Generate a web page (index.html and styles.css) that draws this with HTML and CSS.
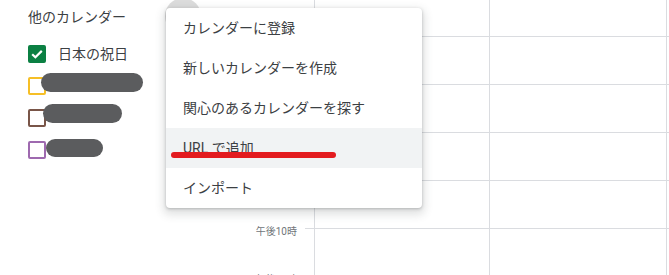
FILE: index.html
```html
<!DOCTYPE html>
<html lang="ja">
<head>
<meta charset="utf-8">
<title>他のカレンダー</title>
<link rel="stylesheet" href="styles.css">
</head>
<body>
<div class="page">
  <aside class="sidebar">
    <div class="section-title">他のカレンダー</div>
    <ul class="cal-list">
      <li class="cal-row">
        <span class="checkbox checked green">
          <svg viewBox="0 0 18 18" width="18" height="18"><path d="M4.2 9.2l3.2 3.1 6.4-6.4" fill="none" stroke="#fff" stroke-width="2.2"/></svg>
        </span>
        <span class="cal-name">日本の祝日</span>
      </li>
      <li class="cal-row">
        <span class="checkbox yellow"></span>
        <span class="redact r1"></span>
      </li>
      <li class="cal-row">
        <span class="checkbox brown"></span>
        <span class="redact r2"></span>
      </li>
      <li class="cal-row">
        <span class="checkbox purple"></span>
        <span class="redact r3"></span>
      </li>
    </ul>
  </aside>
  <div class="gutter">
    <div class="labels">
      <div class="hour">午後10時</div>
      <div class="hour">午後11時</div>
    </div>
    <div class="ticks"></div>
  </div>
  <div class="days">
    <div class="day d1"></div>
    <div class="day d2"></div>
    <div class="day d3"></div>
  </div>

  <span class="hover-circle"></span>
  <div class="menu">
    <div class="menu-item">カレンダーに登録</div>
    <div class="menu-item">新しいカレンダーを作成</div>
    <div class="menu-item">関心のあるカレンダーを探す</div>
    <div class="menu-item active">URL で追加<span class="red-mark"></span></div>
    <div class="menu-item">インポート</div>
  </div>
</div>
</body>
</html>
```

FILE: styles.css
```css
* { box-sizing: border-box; }
html, body {
  margin: 0;
  padding: 0;
  background: #fff;
  overflow: hidden;
}
body {
  font-family: Roboto, "Noto Sans CJK JP", sans-serif;
  color: #3c4043;
}
.page {
  position: relative;
  display: flex;
  width: 669px;
  height: 275px;
  overflow: hidden;
}
.sidebar {
  width: 240px;
  flex: none;
  padding: 7px 0 0 28px;
}
.section-title {
  font-size: 14px;
  line-height: 20px;
  height: 20px;
}
.cal-list {
  list-style: none;
  margin: 11px 0 0;
  padding: 0;
}
.cal-row {
  position: relative;
  display: flex;
  align-items: center;
  height: 32px;
}
.checkbox {
  width: 18px;
  height: 18px;
  border: 2px solid;
  border-radius: 2px;
  flex: none;
  display: flex;
}
.checkbox svg { margin: -2px; }
.checkbox.checked.green { background: #0b8043; border-color: #0b8043; }
.checkbox.yellow { border-color: #f6bf26; }
.checkbox.brown { border-color: #795548; }
.checkbox.purple { border-color: #9e69af; }
.cal-name {
  margin-left: 12px;
  font-size: 14px;
  line-height: 20px;
  padding-bottom: 1px;
}
.redact {
  position: absolute;
  background: #5b5c5e;
  border-radius: 10px;
}
.r1 { left: 13px; top: 3px; width: 102px; height: 19px; }
.r2 { left: 15px; top: 2px; width: 79px; height: 19px; }
.r3 { left: 18px; top: 5px; width: 57px; height: 18px; border-radius: 9px; }

.gutter {
  width: 74px;
  flex: none;
  display: flex;
}
.labels {
  flex: 1;
  padding: 226px 8px 0 0;
  text-align: right;
}
.hour {
  font-size: 10px;
  line-height: 12px;
  height: 48px;
  color: #70757a;
}
.ticks {
  width: 9px;
  background-image: linear-gradient(#dadce0 0 1px, transparent 1px);
  background-size: 100% 48px;
  background-position: 0 36px;
}
.days {
  flex: 1;
  display: flex;
  background-image: linear-gradient(#dadce0 0 1px, transparent 1px);
  background-size: 100% 48px;
  background-position: 0 36px;
}
.day {
  border-left: 1px solid #dadce0;
  height: 100%;
}
.d1 { width: 175px; }
.d2 { width: 177px; }
.d3 { flex: 1; }

.hover-circle {
  position: absolute;
  left: 165px;
  top: -2px;
  width: 36px;
  height: 36px;
  border-radius: 50%;
  background: #dcdcdc;
}
.menu {
  position: absolute;
  left: 166px;
  top: 8px;
  width: 256px;
  background: #fff;
  border-radius: 4px;
  box-shadow: 0 4px 8px 3px rgba(60,64,67,.15), 0 1px 3px rgba(60,64,67,.3);
}
.menu-item {
  position: relative;
  height: 40px;
  display: flex;
  align-items: center;
  padding: 0 0 3px 17px;
  font-size: 14px;
  color: #3c4043;
}
.menu-item.active { background: #f1f3f4; }
.red-mark {
  position: absolute;
  left: 5px;
  top: 24px;
  width: 165px;
  height: 6px;
  border-radius: 3px;
  background: #e31b1f;
}
```
